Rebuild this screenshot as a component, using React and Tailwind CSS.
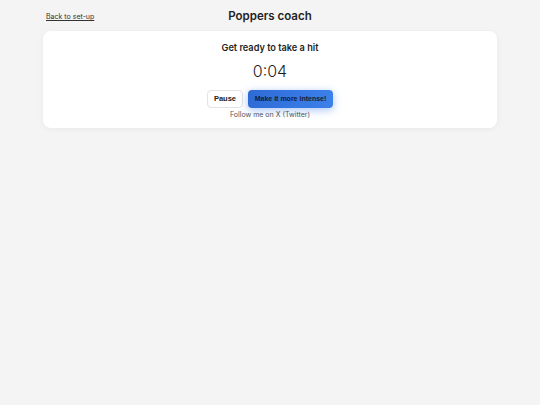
export default function App() {
    return (
        <div className="min-h-screen bg-[#f4f4f4] font-['Inter',sans-serif] text-[#1f1f1f]">
            <div className="px-[43px] pt-[9px]">
                <div className="relative flex items-center h-[16px]">
                    <a href="#" className="ml-[3px] mt-[1px] text-[7px] underline text-[#333]">Back to set-up</a>
                    <h1 className="absolute left-1/2 -translate-x-1/2 text-[11.5px] font-semibold">Poppers coach</h1>
                </div>

                <div className="mt-[6px] bg-white rounded-[8px] shadow-[0_1px_6px_rgba(0,0,0,0.05)] h-[97px] flex flex-col items-center pt-[11px]">
                    <h2 className="text-[9.2px] font-semibold leading-[12px]">Get ready to take a hit</h2>
                    <div className="mt-[7px] text-[16px] font-light leading-[20px]">0:04</div>
                    <div className="mt-[9px] flex gap-[5px]">
                        <button className="h-[18px] w-[36px] rounded-[4px] border border-[#e3e3e3] bg-white text-[7.5px] font-bold font-['Liberation_Sans',sans-serif] text-[#222]">
                            Pause
                        </button>
                        <button className="h-[18px] w-[85px] rounded-[4px] bg-gradient-to-r from-[#2f6bd6] to-[#3c80ea] text-[7px] font-bold font-['Liberation_Sans',sans-serif] text-[#0f1d3d] shadow-[0_2px_8px_rgba(59,125,232,0.45)]">
                            Make it more intense!
                        </button>
                    </div>
                    <p className="mt-[2px] text-[7px] text-[#555] leading-[10px]">Follow me on X (Twitter)</p>
                </div>
            </div>
        </div>
    );
}
